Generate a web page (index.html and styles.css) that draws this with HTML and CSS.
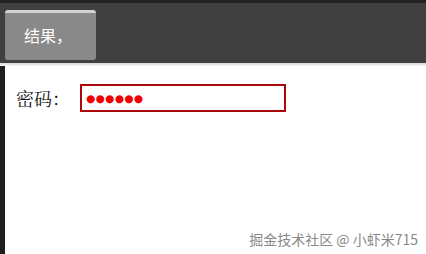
FILE: index.html
```html
<!DOCTYPE html>
<html lang="zh">
<head>
    <meta charset="UTF-8">
    <meta name="viewport" content="width=device-width, initial-scale=1.0">
    <title>密码</title>
    <link rel="stylesheet" href="styles.css">
</head>
<body>
    <div class="screen">
        <div class="status-line"></div>
        <div class="toolbar">
            <button class="result-btn">结果，</button>
        </div>
        <div class="divider"></div>
        <div class="content">
            <div class="edge"></div>
            <div class="main">
                <div class="form-row">
                    <label class="field-label">密码：</label>
                    <div class="password-box"><span class="dots">●●●●●●</span></div>
                </div>
            </div>
        </div>
        <div class="watermark">掘金技术社区 @ 小虾米715</div>
    </div>
</body>
</html>
```

FILE: styles.css
```css
* {
    margin: 0;
    padding: 0;
    box-sizing: border-box;
}

body {
    background-color: #ffffff;
    font-family: "Noto Sans CJK SC", "DejaVu Sans", sans-serif;
}

.screen {
    position: relative;
    width: 426px;
    height: 254px;
    display: flex;
    flex-direction: column;
    overflow: hidden;
}

.status-line {
    height: 3px;
    background-color: #222222;
}

.toolbar {
    height: 60px;
    background-color: #404040;
    padding: 7px 0 0 5px;
}

.result-btn {
    width: 91px;
    height: 50px;
    background-color: #898989;
    border: none;
    border-top: 3px solid #d2d2d2;
    border-radius: 3px;
    color: #ffffff;
    font-family: "Noto Sans CJK SC", sans-serif;
    font-size: 16px;
    text-align: left;
    padding: 0 0 4px 19px;
}

.divider {
    height: 3px;
    background: linear-gradient(#d8d8d8, #f4f4f4);
}

.content {
    flex: 1;
    display: flex;
}

.edge {
    width: 5px;
    background-color: #1e1e1e;
}

.main {
    flex: 1;
    padding: 18px 0 0 11px;
}

.form-row {
    display: flex;
    align-items: center;
    gap: 15px;
}

.field-label {
    font-family: "Noto Serif CJK SC", "Noto Sans CJK SC", serif;
    font-size: 18px;
    color: #111111;
    width: 49px;
    white-space: nowrap;
}

.password-box {
    width: 206px;
    height: 28px;
    border: 2px solid #aa0a0a;
    display: flex;
    align-items: center;
    padding-left: 4px;
}

.dots {
    color: #f00000;
    font-family: "DejaVu Sans", sans-serif;
    font-size: 10.5px;
    letter-spacing: 0.4px;
    line-height: 1;
}

.watermark {
    position: absolute;
    right: 8px;
    bottom: 8px;
    color: #888888;
    font-size: 14px;
    line-height: 1;
}
```
